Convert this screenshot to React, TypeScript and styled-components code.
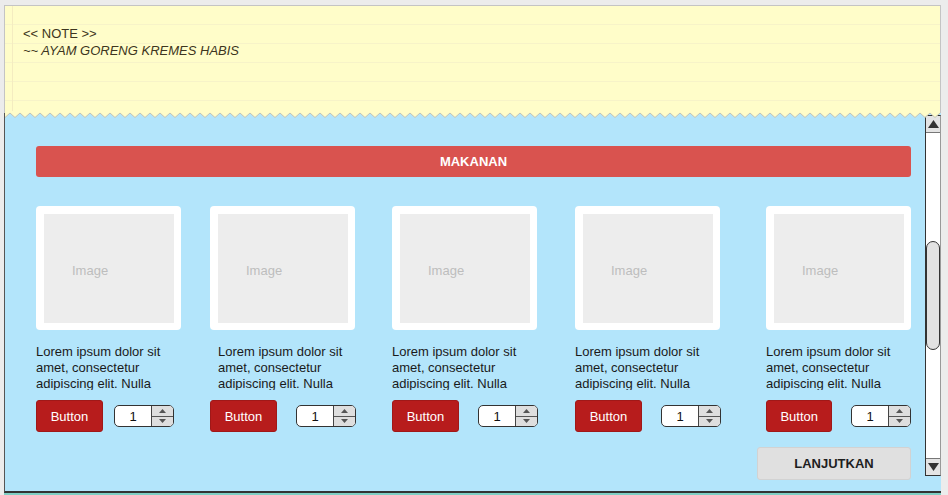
import React from 'react'
import styled, { createGlobalStyle } from 'styled-components'

const GlobalStyle = createGlobalStyle`
  html, body {
    margin: 0;
    padding: 0;
    background: #ececec;
    font-family: 'Liberation Sans', Arial, sans-serif;
  }
`

const items = [
  { textShift: 0, spinGap: 11 },
  { textShift: 8, spinGap: 19 },
  { textShift: 0, spinGap: 19 },
  { textShift: 0, spinGap: 19 },
  { textShift: 0, spinGap: 19 },
]

const App = () => {
  return (
    <>
      <GlobalStyle />
      <Frame>
        <Note>
          <NoteLine>&lt;&lt; NOTE &gt;&gt;</NoteLine>
          <NoteLine italic>~~ AYAM GORENG KREMES HABIS</NoteLine>
          <Zigzag width="100%" height="8">
            <defs>
              <pattern id="zz" width="10" height="8" patternUnits="userSpaceOnUse">
                <path d="M0 0 L0 6.5 L5 2 L10 6.5 L10 0 Z" fill="#fffdc9" />
                <path d="M0 6.5 L5 2 L10 6.5" fill="none" stroke="#c2c2b6" strokeWidth="1" />
              </pattern>
            </defs>
            <rect width="100%" height="8" fill="url(#zz)" />
          </Zigzag>
        </Note>
        <Panel>
          <Content>
            <Banner>MAKANAN</Banner>
            <Cards>
              {items.map((it, i) => (
                <Card key={i}>
                  <ImageBox>
                    <ImageInner>Image</ImageInner>
                  </ImageBox>
                  <Desc shift={it.textShift}>
                    Lorem ipsum dolor sit amet, consectetur adipiscing elit. Nulla
                  </Desc>
                  <Actions gap={it.spinGap}>
                    <RedButton>Button</RedButton>
                    <Spinner>
                      <SpinValue>1</SpinValue>
                      <SpinArrows>
                        <SpinArrow>
                          <svg width="7" height="4" viewBox="0 0 7 4"><path d="M0 4 L3.5 0 L7 4Z" fill="#555" /></svg>
                        </SpinArrow>
                        <SpinArrow bottom>
                          <svg width="7" height="4" viewBox="0 0 7 4"><path d="M0 0 L3.5 4 L7 0Z" fill="#555" /></svg>
                        </SpinArrow>
                      </SpinArrows>
                    </Spinner>
                  </Actions>
                </Card>
              ))}
            </Cards>
            <Footer>
              <NextButton>LANJUTKAN</NextButton>
            </Footer>
          </Content>
          <Scrollbar>
            <ScrollArrow>
              <svg width="11" height="8" viewBox="0 0 11 8"><path d="M0 8 L5.5 0 L11 8Z" fill="#333" /></svg>
            </ScrollArrow>
            <Track>
              <Thumb />
            </Track>
            <ScrollArrow bottom>
              <svg width="11" height="8" viewBox="0 0 11 8"><path d="M0 0 L5.5 8 L11 0Z" fill="#333" /></svg>
            </ScrollArrow>
          </Scrollbar>
        </Panel>
        <Strip />
      </Frame>
    </>
  )
}

export default App

const Frame = styled.div`
  width: 937px;
  margin: 5px 0 0 4px;
  display: flex;
  flex-direction: column;
`

const Note = styled.div`
  position: relative;
  z-index: 1;
  height: 108px;
  box-sizing: border-box;
  border: 1px solid #c4c4c4;
  border-bottom: none;
  padding: 19px 0 0 18px;
  background-color: #fffdc9;
  background-image:
    linear-gradient(90deg, transparent 7px, #f4ecc0 7px, #f4ecc0 8px, transparent 8px),
    repeating-linear-gradient(180deg, transparent 0, transparent 18px, #f7f3c8 18px, #f7f3c8 19px);
`

const NoteLine = styled.div<{ italic?: boolean }>`
  font-size: 13px;
  line-height: 17px;
  color: #3d3520;
  font-style: ${(p) => (p.italic ? 'italic' : 'normal')};
`

const Zigzag = styled.svg`
  position: absolute;
  left: 0;
  bottom: -6px;
  display: block;
`

const Panel = styled.div`
  display: flex;
  height: 378px;
  background: #b3e5fb;
  border-left: 1px solid #555;
  border-bottom: 2px solid #333;
`

const Content = styled.div`
  flex: 1;
  padding: 33px 14px 0 31px;
  display: flex;
  flex-direction: column;
`

const Banner = styled.div`
  height: 31px;
  border-radius: 3px;
  background: #d9534f;
  color: #fff;
  font-weight: bold;
  font-size: 13px;
  display: flex;
  align-items: center;
  justify-content: center;
`

const Cards = styled.div`
  margin-top: 29px;
  display: grid;
  grid-template-columns: 174px 182px 183px 191px 145px;
`

const Card = styled.div`
  display: flex;
  flex-direction: column;
`

const ImageBox = styled.div`
  width: 145px;
  height: 124px;
  box-sizing: border-box;
  background: #fff;
  border-radius: 4px;
  padding: 8px 7px 7px 8px;
`

const ImageInner = styled.div`
  height: 100%;
  box-sizing: border-box;
  background: #ededed;
  color: #bdbdbd;
  font-size: 13px;
  display: flex;
  align-items: center;
  padding: 4px 0 0 28px;
`

const Desc = styled.div<{ shift: number }>`
  margin: 14px 0 0 ${(p) => p.shift}px;
  width: 140px;
  height: 46px;
  overflow: hidden;
  font-size: 13px;
  line-height: 16px;
  color: #1a1a1a;
`

const Actions = styled.div<{ gap: number }>`
  margin-top: 10px;
  display: flex;
  align-items: center;
  gap: ${(p) => p.gap}px;
`

const RedButton = styled.button`
  width: 67px;
  height: 32px;
  border: 1px solid #a01818;
  border-radius: 3px;
  background: #b71c1c;
  color: #fff;
  font-family: 'Liberation Sans', Arial, sans-serif;
  font-size: 13px;
  padding: 0;
`

const Spinner = styled.div`
  width: 60px;
  height: 22px;
  box-sizing: border-box;
  border: 1px solid #333;
  border-radius: 5px;
  display: flex;
  overflow: hidden;
  background: #fff;
`

const SpinValue = styled.div`
  flex: 1;
  font-size: 13px;
  display: flex;
  align-items: center;
  justify-content: center;
  color: #111;
`

const SpinArrows = styled.div`
  width: 21px;
  border-left: 1px solid #444;
  background: #dedede;
  display: flex;
  flex-direction: column;
`

const SpinArrow = styled.div<{ bottom?: boolean }>`
  flex: 1;
  display: flex;
  align-items: center;
  justify-content: center;
  border-top: ${(p) => (p.bottom ? '1px solid #555' : 'none')};
`

const Footer = styled.div`
  margin-top: 15px;
  display: flex;
  justify-content: flex-end;
`

const NextButton = styled.button`
  width: 154px;
  height: 33px;
  border: 1px solid #d2d2d2;
  border-radius: 3px;
  background: #e0e0e0;
  color: #1e1e1e;
  font-family: 'Liberation Sans', Arial, sans-serif;
  font-weight: bold;
  font-size: 13px;
  padding: 0;
`

const Scrollbar = styled.div`
  align-self: flex-start;
  margin-top: 2px;
  width: 17px;
  height: 361px;
  box-sizing: border-box;
  border: 1px solid #333;
  border-right-color: #999;
  background: #fff;
  display: flex;
  flex-direction: column;
`

const ScrollArrow = styled.div<{ bottom?: boolean }>`
  height: 16px;
  background: #e4e4e4;
  display: flex;
  align-items: center;
  justify-content: center;
  border-top: ${(p) => (p.bottom ? '1px solid #777' : 'none')};
  border-bottom: ${(p) => (p.bottom ? 'none' : '1px solid #777')};
`

const Track = styled.div`
  flex: 1;
  position: relative;
`

const Thumb = styled.div`
  position: absolute;
  left: 0;
  right: 0;
  top: 108px;
  height: 109px;
  box-sizing: border-box;
  border: 1px solid #333;
  border-radius: 8px;
  background: #e2e2e2;
`

const Strip = styled.div`
  height: 4px;
  background: #7fcfc4;
`
